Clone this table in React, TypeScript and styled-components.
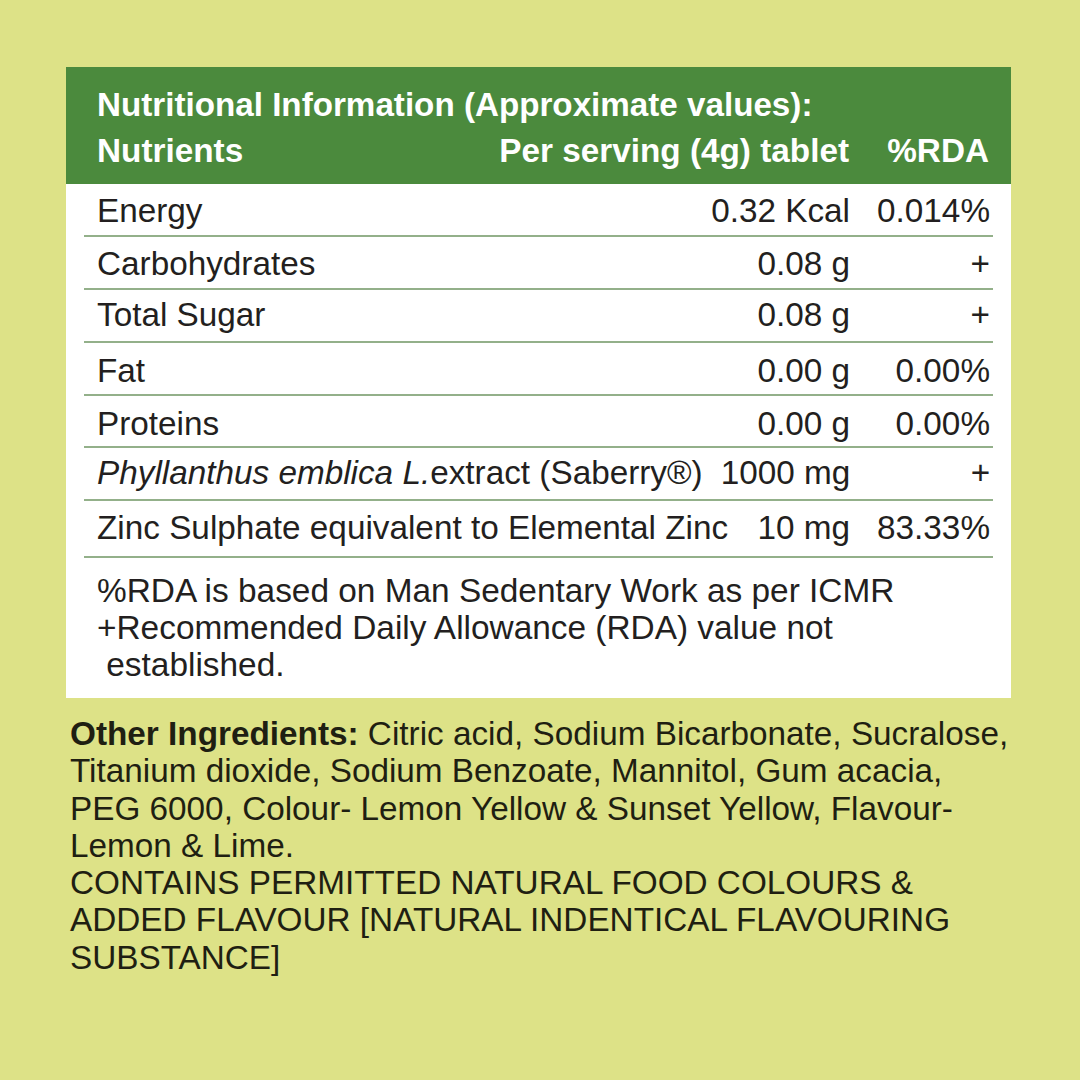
import React from "react";
import styled, { createGlobalStyle } from "styled-components";

const Global = createGlobalStyle`
  html, body {
    margin: 0;
    padding: 0;
    background: #dde287;
  }
  body {
    font-family: "Liberation Sans", Arial, Helvetica, sans-serif;
    color: #231f20;
  }
`;

const Page = styled.div`
  width: 1080px;
  height: 1080px;
  box-sizing: border-box;
  padding: 67px 69px 0 66px;
  background: #dde287;
`;

const Panel = styled.section`
  width: 945px;
  background: #ffffff;
`;

const Header = styled.header`
  background: #4b8a3d;
  color: #ffffff;
  font-weight: 700;
  font-size: 33.2px;
  line-height: 46px;
  padding: 15px 22px 10px 31px;
`;

const HeaderRow = styled.div`
  display: grid;
  grid-template-columns: 1fr auto 140px;
  font-size: 33.3px;
`;

const Cell = styled.div<{ $align?: "left" | "right" }>`
  text-align: ${(p) => p.$align ?? "left"};
  white-space: nowrap;
`;

const Body = styled.div`
  padding: 0 18px;
`;

const Row = styled.div<{ $pt?: number; $pb?: number }>`
  display: grid;
  grid-template-columns: 1fr auto 140px;
  font-size: 33.3px;
  line-height: 37px;
  padding: ${(p) => p.$pt ?? 8}px 3px ${(p) => p.$pb ?? 6}px 13px;
  border-bottom: 2px solid #93b08a;
`;

const Gap = styled.span`
  display: inline-block;
  width: 18px;
`;

const Notes = styled.div`
  font-size: 33.4px;
  line-height: 37px;
  padding: 14px 20px 15px 31px;
`;

const Ingredients = styled.p`
  margin: 17px 0 0 4px;
  font-size: 33.3px;
  line-height: 37.3px;
  color: #1f1f12;
`;

const Bold = styled.strong`
  font-weight: 700;
`;

type R = { name: React.ReactNode; value: string; rda: string; pt?: number; pb?: number };

const rows: R[] = [
  { name: "Energy", value: "0.32 Kcal", rda: "0.014%" },
  { name: "Carbohydrates", value: "0.08 g", rda: "+" },
  { name: "Total Sugar", value: "0.08 g", rda: "+", pt: 6, pb: 8 },
  { name: "Fat", value: "0.00 g", rda: "0.00%", pt: 9, pb: 5 },
  { name: "Proteins", value: "0.00 g", rda: "0.00%", pt: 9, pb: 4 },
  {
    name: (
      <>
        <i>Phyllanthus emblica L.</i>extract (Saberry®)
      </>
    ),
    value: "1000 mg",
    rda: "+",
    pt: 6,
    pb: 8,
  },
  { name: "Zinc Sulphate equivalent to Elemental Zinc", value: "10 mg", rda: "83.33%", pt: 8, pb: 10 },
];

export default function App() {
  return (
    <>
      <Global />
      <Page>
        <Panel>
          <Header>
            <div>Nutritional Information (Approximate values):</div>
            <HeaderRow>
              <Cell>Nutrients</Cell>
              <Cell $align="right">Per serving (4g) tablet</Cell>
              <Cell $align="right">%RDA</Cell>
            </HeaderRow>
          </Header>
          <Body>
            {rows.map((r, i) => (
              <Row key={i} $pt={r.pt} $pb={r.pb}>
                <Cell>
                  {r.name}
                  <Gap />
                </Cell>
                <Cell $align="right">{r.value}</Cell>
                <Cell $align="right">{r.rda}</Cell>
              </Row>
            ))}
          </Body>
          <Notes>
            %RDA is based on Man Sedentary Work as per ICMR
            <br />
            +Recommended Daily Allowance (RDA) value not
            <br />
            &nbsp;established.
          </Notes>
        </Panel>
        <Ingredients>
          <Bold>Other Ingredients:</Bold> Citric acid, Sodium Bicarbonate, Sucralose,
          <br />
          Titanium dioxide, Sodium Benzoate, Mannitol, Gum acacia,
          <br />
          PEG 6000, Colour- Lemon Yellow &amp; Sunset Yellow, Flavour-
          <br />
          Lemon &amp; Lime.
          <br />
          CONTAINS PERMITTED NATURAL FOOD COLOURS &amp;
          <br />
          ADDED FLAVOUR [NATURAL INDENTICAL FLAVOURING
          <br />
          SUBSTANCE]
        </Ingredients>
      </Page>
    </>
  );
}
